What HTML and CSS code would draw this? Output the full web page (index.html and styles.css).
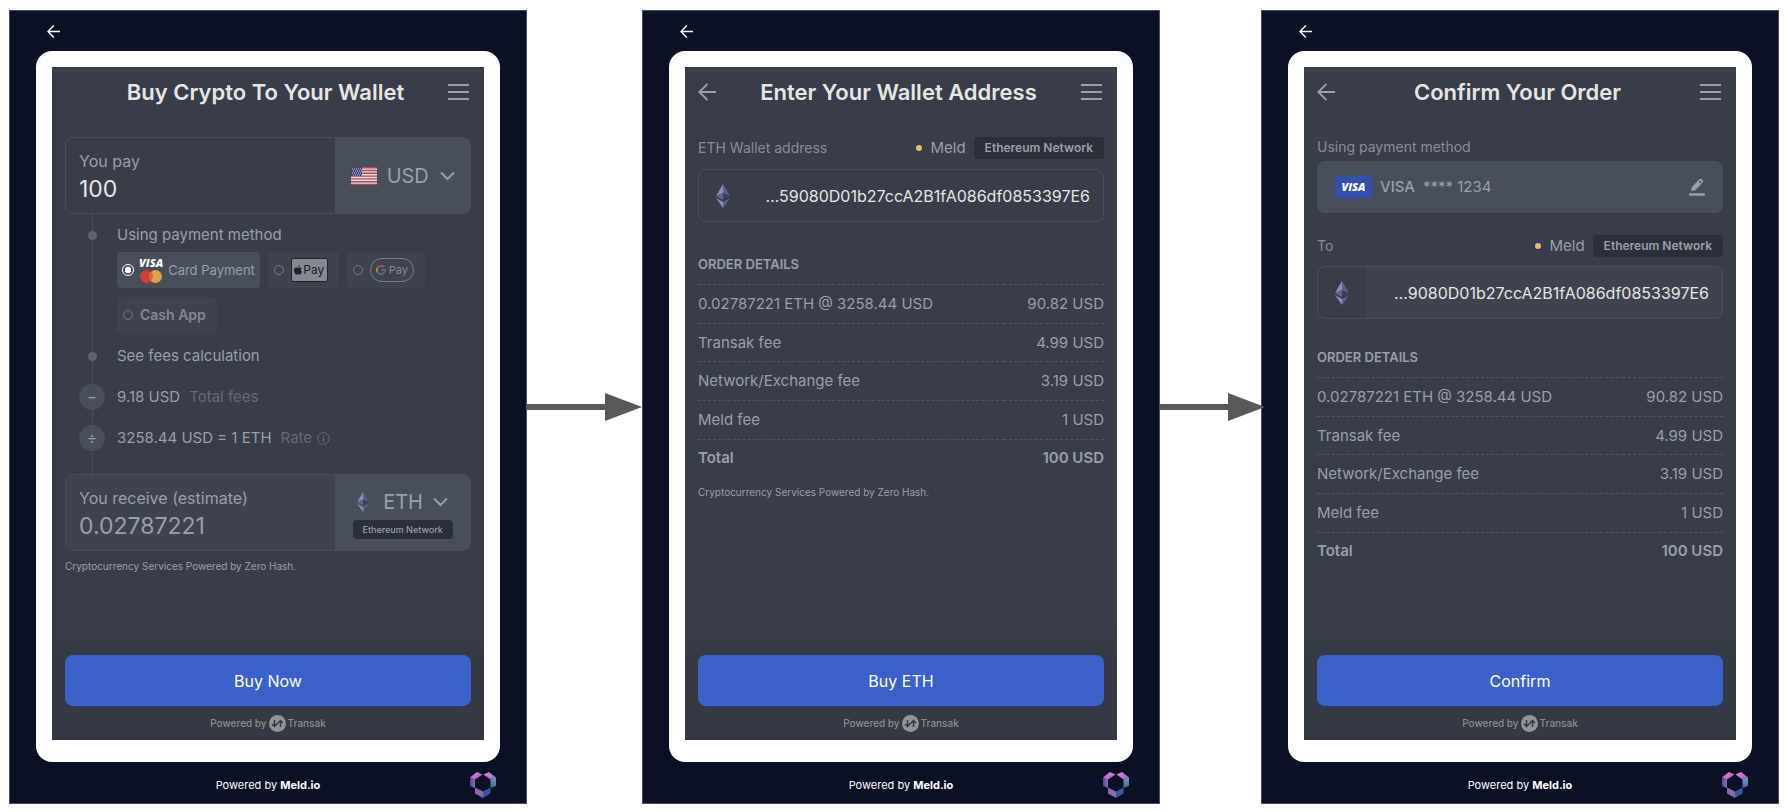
FILE: index.html
```html
<!DOCTYPE html>
<html lang="en">
<head>
    <meta charset="UTF-8">
    <meta name="viewport" content="width=device-width, initial-scale=1.0">
    <title>Meld Crypto Checkout Flow</title>
    <link rel="stylesheet" href="styles.css">
</head>
<body>
    <!-- Shared icons -->
    <svg class="sprite" aria-hidden="true">
        <linearGradient id="pink" x1="0" y1="0" x2="1" y2="1"><stop offset="0" stop-color="#ea86d4"/><stop offset="1" stop-color="#9c62c0"/></linearGradient>
        <linearGradient id="violet" x1="0" y1="0" x2="1" y2="0"><stop offset="0" stop-color="#52469a"/><stop offset="1" stop-color="#8a6fb8"/></linearGradient>
        <linearGradient id="teal" x1="0" y1="0" x2="0" y2="1"><stop offset="0" stop-color="#6f9fbc"/><stop offset="1" stop-color="#4064a8"/></linearGradient>
        <symbol id="i-back" viewBox="0 0 18 18"><path d="M18 9H1.500M9.500 .8L1.300 9L9.500 17.200" fill="none" stroke="currentColor" stroke-width="1.900"/></symbol>
        <symbol id="i-menu" viewBox="0 0 21 16"><path d="M0 1h21M0 8h21M0 15h21" stroke="currentColor" stroke-width="2"/></symbol>
        <symbol id="i-chevron" viewBox="0 0 15 10"><path d="M1 1.500L7.500 8L14 1.500" fill="none" stroke="currentColor" stroke-width="2"/></symbol>
        <symbol id="i-eth" viewBox="0 0 14 24">
            <path d="M7 0L0 12l7-3z" fill="#8c8fae"/><path d="M7 0l7 12-7-3z" fill="#5e6189"/>
            <path d="M7 9l-7 3 7 4z" fill="#62668f"/><path d="M7 9l7 3-7 4z" fill="#3b3e66"/>
            <path d="M0 14l7 10v-6z" fill="#8c8fae"/><path d="M14 14L7 24v-6z" fill="#5e6189"/>
        </symbol>
        <symbol id="i-transak" viewBox="0 0 17 17"><circle cx="8.500" cy="8.500" r="8.500" fill="#929496"/><path d="M5.500 5v6M3 9l2.500 2.500L8 9M5.500 11.500L11.500 5.500M9 8l2.500-2.500L14 8M11.500 6v6" fill="none" stroke="#343943" stroke-width="1.500"/></symbol>
        <symbol id="i-meld" viewBox="0 0 26 26">
            <path d="M0 5.500L7 0l5.500 2.500L5 7.500z" fill="url(#pink)"/>
            <path d="M0 5.500l5 2V16l-5-2z" fill="url(#violet)"/>
            <path d="M13.500 2.500L19 0l7 5.500-5.500 2z" fill="url(#pink)"/>
            <path d="M26 5.500l-5.500 2V16l5.500-2z" fill="url(#teal)"/>
            <path d="M5 15.500l8 4V26l-8-4.500z" fill="#8e68a8"/>
            <path d="M20.500 15.500l-7.500 4V26l7.500-4.500z" fill="#3c559c"/>
        </symbol>
    </svg>

    <main class="flow">
        <!-- Step 1: amount -->
        <section class="panel">
            <div class="panel-top">
                <button class="icon-btn exit" aria-label="Exit"><svg width="13" height="13"><use href="#i-back"/></svg></button>
            </div>
            <div class="card">
                <div class="screen">
                    <header class="screen-header">
                        <span class="header-side"></span>
                        <h1>Buy Crypto To Your Wallet</h1>
                        <button class="icon-btn" aria-label="Menu"><svg width="21" height="16"><use href="#i-menu"/></svg></button>
                    </header>

                    <form class="content">
                        <div class="amount-box">
                            <div class="amount">
                                <label for="pay">You pay</label>
                                <input id="pay" type="text" value="100">
                            </div>
                            <div class="currency">
                                <div class="currency-row">
                                    <svg width="26" height="18" viewBox="0 0 26 18">
                                        <path fill="#e2dcdc" d="M0 0h26v18H0z"/>
                                        <path d="M0 .7h26M0 3.500h26M0 6.300h26M0 9.100h26M0 11.900h26M0 14.700h26M0 17.500h26" stroke="#b04c52" stroke-width="1.400"/>
                                        <path fill="#41437a" d="M0 0h11v9H0z"/>
                                        <path d="M1 2h10M2 4h9M1 6h10M2 8h9" stroke="#c9c9d8" stroke-dasharray="1 1"/>
                                    </svg>
                                    <select aria-label="Pay currency"><option>USD</option></select>
                                    <svg width="15" height="10"><use href="#i-chevron"/></svg>
                                </div>
                            </div>
                        </div>

                        <div class="timeline">
                            <div class="step"><span class="marker"><i class="dot"></i></span><span id="method">Using payment method</span></div>
                            <div class="methods" role="radiogroup" aria-labelledby="method">
                                <label class="chip active">
                                    <input type="radio" name="method" checked>
                                    <span class="card-logos">
                                        <span class="visa">VISA</span>
                                        <svg width="22" height="13" viewBox="0 0 22 13"><circle cx="6.500" cy="6.500" r="6.500" fill="#cc4138"/><circle cx="15.500" cy="6.500" r="6.500" fill="#e2a14c"/><path d="M11 1.800a6.500 6.500 0 0 1 0 9.400a6.500 6.500 0 0 1 0-9.400z" fill="#d9673c"/></svg>
                                    </span>
                                    Card Payment
                                </label>
                                <label class="chip">
                                    <input type="radio" name="method">
                                    <span class="apple-pay">
                                        <svg width="8" height="10" viewBox="0 0 8 10"><path d="M5.700 0C5.700 1.200 4.900 2.100 3.900 2.100C3.800 1 4.700.1 5.700 0zM7.600 3.400C6.400 4.200 6.600 6 8 6.600C7.500 8.200 6.700 9.600 5.800 9.600C5.100 9.600 4.900 9.200 4.200 9.200C3.500 9.200 3.200 9.600 2.600 9.600C1.600 9.600 0 7.300 0 5.300C0 3.400 1.200 2.500 2.400 2.500C3.200 2.500 3.700 3 4.200 3C4.700 3 5.300 2.400 6.200 2.500C6.800 2.500 7.300 2.900 7.600 3.400z" fill="#1c2027"/></svg>Pay
                                    </span>
                                </label>
                                <label class="chip">
                                    <input type="radio" name="method">
                                    <span class="google-pay">
                                        <svg width="10" height="10" viewBox="0 0 10 10" fill="none" stroke-width="1.800"><path d="M8.100 2.200A4.100 4.100 0 0 0 1.500 2.900" stroke="#a8544f"/><path d="M1.500 2.900a4.100 4.100 0 0 0 0 4.200" stroke="#a8904a"/><path d="M1.500 7.100a4.100 4.100 0 0 0 6 1.100" stroke="#4c7d5d"/><path d="M7.500 8.200A4.100 4.100 0 0 0 9.100 5H5.200" stroke="#4b69a4"/></svg>
                                        Pay
                                    </span>
                                </label>
                                <label class="chip cash"><input type="radio" name="method"> Cash App</label>
                            </div>
                            <div class="step fees"><span class="marker"><i class="dot"></i></span>See fees calculation</div>
                            <div class="step"><span class="marker sign">−</span>9.18 USD <span class="muted">Total fees</span></div>
                            <div class="step">
                                <span class="marker sign">÷</span>3258.44 USD = 1 ETH
                                <span class="muted">Rate
                                    <svg width="13" height="13" viewBox="0 0 13 13" fill="none" stroke="currentColor"><circle cx="6.500" cy="6.500" r="5.800"/><path d="M6.500 5.500v4.500M6.500 3v1.400"/></svg>
                                </span>
                            </div>
                        </div>

                        <div class="amount-box receive">
                            <div class="amount">
                                <label for="receive">You receive (estimate)</label>
                                <input id="receive" type="text" value="0.02787221" readonly>
                            </div>
                            <div class="currency">
                                <div class="currency-row">
                                    <svg class="eth-small" width="12" height="20"><use href="#i-eth"/></svg>
                                    <select aria-label="Receive currency"><option>ETH</option></select>
                                    <svg width="15" height="10"><use href="#i-chevron"/></svg>
                                </div>
                                <span class="badge small">Ethereum Network</span>
                            </div>
                        </div>
                        <p class="disclaimer">Cryptocurrency Services Powered by Zero Hash.</p>
                    </form>

                    <footer class="screen-footer">
                        <button class="primary">Buy Now</button>
                        <p class="transak">Powered by <svg width="17" height="17"><use href="#i-transak"/></svg> Transak</p>
                    </footer>
                </div>
            </div>
            <div class="panel-bottom">
                <span></span>
                <p>Powered by <b>Meld.io</b></p>
                <svg width="26" height="26"><use href="#i-meld"/></svg>
            </div>
        </section>

        <div class="arrow">
            <span class="arrow-line"></span>
            <svg width="37" height="28" viewBox="0 0 37 28"><path d="M0 0l37 14L0 28z" fill="#595959"/></svg>
        </div>

        <!-- Step 2: wallet address -->
        <section class="panel">
            <div class="panel-top">
                <button class="icon-btn exit" aria-label="Exit"><svg width="13" height="13"><use href="#i-back"/></svg></button>
            </div>
            <div class="card">
                <div class="screen">
                    <header class="screen-header">
                        <button class="icon-btn header-side" aria-label="Back"><svg width="18" height="18"><use href="#i-back"/></svg></button>
                        <h1>Enter Your Wallet Address</h1>
                        <button class="icon-btn" aria-label="Menu"><svg width="21" height="16"><use href="#i-menu"/></svg></button>
                    </header>

                    <form class="content">
                        <div class="field-head">
                            <label for="wallet">ETH Wallet address</label>
                            <span class="network"><i class="status"></i>Meld <span class="badge">Ethereum Network</span></span>
                        </div>
                        <div class="address">
                            <span class="address-icon"><svg width="14" height="24"><use href="#i-eth"/></svg></span>
                            <input id="wallet" type="text" value="…59080D01b27ccA2B1fA086df0853397E6">
                        </div>

                        <h2>ORDER DETAILS</h2>
                        <table class="details">
                            <tr><td>0.02787221 ETH @ 3258.44 USD</td><td>90.82 USD</td></tr>
                            <tr><td>Transak fee</td><td>4.99 USD</td></tr>
                            <tr><td>Network/Exchange fee</td><td>3.19 USD</td></tr>
                            <tr><td>Meld fee</td><td>1 USD</td></tr>
                            <tr class="total"><td>Total</td><td>100 USD</td></tr>
                        </table>
                        <p class="disclaimer">Cryptocurrency Services Powered by Zero Hash.</p>
                    </form>

                    <footer class="screen-footer">
                        <button class="primary">Buy ETH</button>
                        <p class="transak">Powered by <svg width="17" height="17"><use href="#i-transak"/></svg> Transak</p>
                    </footer>
                </div>
            </div>
            <div class="panel-bottom">
                <span></span>
                <p>Powered by <b>Meld.io</b></p>
                <svg width="26" height="26"><use href="#i-meld"/></svg>
            </div>
        </section>

        <div class="arrow over">
            <span class="arrow-line"></span>
            <svg width="37" height="28" viewBox="0 0 37 28"><path d="M0 0l37 14L0 28z" fill="#595959"/></svg>
        </div>

        <!-- Step 3: confirmation -->
        <section class="panel">
            <div class="panel-top">
                <button class="icon-btn exit" aria-label="Exit"><svg width="13" height="13"><use href="#i-back"/></svg></button>
            </div>
            <div class="card">
                <div class="screen">
                    <header class="screen-header">
                        <button class="icon-btn header-side" aria-label="Back"><svg width="18" height="18"><use href="#i-back"/></svg></button>
                        <h1>Confirm Your Order</h1>
                        <button class="icon-btn" aria-label="Menu"><svg width="21" height="16"><use href="#i-menu"/></svg></button>
                    </header>

                    <form class="content confirm">
                        <p class="caption">Using payment method</p>
                        <div class="saved-card">
                            <span class="visa-badge">VISA</span>
                            <b>VISA</b>
                            <span>**** 1234</span>
                            <button type="button" class="icon-btn edit" aria-label="Edit payment method">
                                <svg width="16" height="18" viewBox="0 0 16 18"><path d="M1 16.500h14" stroke="currentColor" stroke-width="2.400" stroke-linecap="round"/><path fill="currentColor" fill-rule="evenodd" d="M2 13L2.600 9.600L10 1.500Q11.500 0 13 1.200L13.600 1.800Q15 3.200 13.600 4.600L6 12.400zM11 2.600L10 3.700L11.700 5.300L12.700 4.200z"/></svg>
                            </button>
                        </div>
                        <div class="field-head">
                            <label for="to">To</label>
                            <span class="network"><i class="status"></i>Meld <span class="badge">Ethereum Network</span></span>
                        </div>
                        <div class="address locked">
                            <span class="address-icon"><svg width="14" height="24"><use href="#i-eth"/></svg></span>
                            <input id="to" type="text" value="…9080D01b27ccA2B1fA086df0853397E6" readonly>
                        </div>

                        <h2>ORDER DETAILS</h2>
                        <table class="details">
                            <tr><td>0.02787221 ETH @ 3258.44 USD</td><td>90.82 USD</td></tr>
                            <tr><td>Transak fee</td><td>4.99 USD</td></tr>
                            <tr><td>Network/Exchange fee</td><td>3.19 USD</td></tr>
                            <tr><td>Meld fee</td><td>1 USD</td></tr>
                            <tr class="total"><td>Total</td><td>100 USD</td></tr>
                        </table>
                    </form>

                    <footer class="screen-footer">
                        <button class="primary">Confirm</button>
                        <p class="transak">Powered by <svg width="17" height="17"><use href="#i-transak"/></svg> Transak</p>
                    </footer>
                </div>
            </div>
            <div class="panel-bottom">
                <span></span>
                <p>Powered by <b>Meld.io</b></p>
                <svg width="26" height="26"><use href="#i-meld"/></svg>
            </div>
        </section>
    </main>
</body>
</html>
```
FILE: styles.css
```css
:root {
    --navy: #0b1025;
    --screen: #383d49;
    --raised: #494e5b;
    --line: #494e5b;
    --badge: #2a2f39;
    --text: #9a9fac;
    --muted: #666b78;
    --bright: #e6e6e4;
    --primary: #3963cb;
}

* {
    box-sizing: border-box;
    margin: 0;
    padding: 0;
}

body {
    background: #fff;
    color: var(--text);
    font-family: Inter, "Open Sans", sans-serif;
    font-size: 15px;
    line-height: 20px;
}

button, input, select {
    font: inherit;
    color: inherit;
    background: none;
    border: none;
    outline: none;
}

svg {
    display: block;
    flex: none;
}

.sprite {
    position: absolute;
    width: 0;
    height: 0;
}

.flow {
    display: grid;
    grid-template-columns: 518fr 115fr 518fr 101fr 518fr;
    min-height: 100vh;
    padding: 10px 9px 8px;
}

/* Outer panel */
.panel {
    display: flex;
    flex-direction: column;
    min-width: 0;
    padding: 0 26px;
    background: var(--navy);
    border: 1px solid #4b5063;
}

.panel-top {
    display: flex;
    align-items: center;
    height: 40px;
    padding-left: 11px;
}

.icon-btn {
    display: flex;
    cursor: pointer;
}

.exit {
    color: #fff;
}

.card {
    display: flex;
    flex: 1;
    padding: 16px 16px 22px;
    background: #fff;
    border-radius: 16px;
}

.panel-bottom {
    display: grid;
    grid-template-columns: 26px 1fr 26px;
    align-items: center;
    height: 41px;
    padding: 4px 4px 0;
    color: #fff;
    font-size: 11px;
    text-align: center;
}

/* Widget screen */
.screen {
    display: flex;
    flex: 1;
    flex-direction: column;
    min-width: 0;
    background: var(--screen);
}

.screen-header {
    display: flex;
    align-items: center;
    justify-content: space-between;
    height: 50px;
    padding: 0 15px 0 13px;
}

.header-side {
    width: 18px;
}

h1 {
    color: var(--bright);
    font-size: 22px;
    font-weight: 600;
    line-height: 28px;
}

.content {
    flex: 1;
    padding: 20px 13px 0;
}

/* Amount boxes */
.amount-box {
    display: grid;
    grid-template-columns: 2fr 1fr;
    height: 77px;
    border: 1px solid var(--line);
    border-radius: 8px;
    overflow: hidden;
}

.amount {
    display: flex;
    flex-direction: column;
    justify-content: center;
    min-width: 0;
    padding: 6px 13px 0;
}

.amount label {
    font-size: 16px;
}

.amount input {
    width: 100%;
    height: 36px;
    color: var(--bright);
    font-size: 23px;
}

.receive .amount {
    background: #3e434f;
}

.receive .amount input {
    color: var(--text);
}

.currency {
    display: flex;
    flex-direction: column;
    align-items: center;
    justify-content: center;
    gap: 6px;
    background: var(--raised);
}

.receive .currency {
    padding-top: 4px;
}

.currency-row {
    display: flex;
    align-items: center;
    gap: 10px;
}

.currency select {
    appearance: none;
    font-size: 20px;
    line-height: 24px;
}

.eth-small {
    margin-right: 4px;
}

.badge {
    display: flex;
    align-items: center;
    height: 22px;
    padding: 0 11px;
    background: var(--badge);
    border-radius: 4px;
    font-size: 12px;
    font-weight: 600;
}

.badge.small {
    height: 19px;
    padding: 0 10px;
    font-size: 9px;
    font-weight: 500;
}

/* Steps between the two amounts */
.timeline {
    margin-left: 27px;
    padding: 11px 0 26px;
    border-left: 1px solid var(--line);
}

.step {
    display: flex;
    align-items: center;
    gap: 12px;
    height: 20px;
    margin-left: -14px;
    font-size: 15px;
}

.step + .step {
    margin-top: 21px;
}

.step.fees {
    margin-top: 13px;
}

.marker {
    display: flex;
    align-items: center;
    justify-content: center;
    width: 26px;
    height: 26px;
}

.dot {
    width: 9px;
    height: 9px;
    background: #5c646c;
    border-radius: 50%;
}

.sign {
    background: var(--raised);
    border-radius: 50%;
}

.muted {
    display: flex;
    align-items: center;
    gap: 5px;
    color: var(--muted);
}

.step .muted {
    margin-left: -3px;
}

.methods {
    display: flex;
    flex-wrap: wrap;
    gap: 9px 8px;
    margin: 7px 0 0 24px;
}

.chip {
    display: flex;
    align-items: center;
    gap: 7px;
    height: 36px;
    padding: 0 11px 0 6px;
    background: #3e434f;
    border-radius: 4px;
    font-size: 13px;
}

.chip.active {
    gap: 5px;
    padding: 0 5px;
    background: var(--raised);
}

.chip input {
    appearance: none;
    flex: none;
    width: 10px;
    height: 10px;
    border: 1px solid #777b83;
    border-radius: 50%;
}

.chip input:checked {
    width: 12px;
    height: 12px;
    border-color: #fff;
    background: radial-gradient(#fff 45%, transparent 50%);
}

.chip.cash {
    color: #85888f;
    font-size: 14px;
    font-weight: 600;
}

.card-logos {
    display: flex;
    flex-direction: column;
    align-items: center;
    gap: 3px;
}

.visa {
    color: #fff;
    font: italic 800 11px/9px "Open Sans", sans-serif;
}

.apple-pay,
.google-pay {
    display: flex;
    align-items: center;
    justify-content: center;
    height: 24px;
    font-size: 12px;
    line-height: 16px;
}

.apple-pay {
    gap: 1px;
    width: 37px;
    background: #858994;
    border: 1px solid #20242b;
    border-radius: 2px;
    color: #1c2027;
}

.google-pay {
    gap: 3px;
    width: 44px;
    border: 1px solid #7c7f87;
    border-radius: 12px;
    color: #858991;
    font-size: 11px;
}

.disclaimer {
    margin-top: 5px;
    font-size: 10px;
}

/* Wallet address */
.field-head {
    display: flex;
    align-items: center;
    justify-content: space-between;
    height: 22px;
}

.field-head label,
.caption {
    color: #888d9a;
    font-size: 14px;
}

.network {
    display: flex;
    align-items: center;
    gap: 8px;
    font-size: 15px;
}

.status {
    width: 6px;
    height: 6px;
    background: #e8bd68;
    border-radius: 50%;
}

.address {
    display: flex;
    height: 53px;
    margin-top: 10px;
    border: 1px solid var(--line);
    border-radius: 8px;
    overflow: hidden;
}

.address-icon {
    display: flex;
    align-items: center;
    justify-content: center;
    width: 48px;
}

.address input {
    flex: 1;
    min-width: 0;
    padding-right: 13px;
    color: var(--bright);
    font-size: 16px;
    text-align: right;
}

.address.locked input {
    background: #3e434f;
}

.confirm .caption {
    margin-bottom: 4px;
}

.confirm .address {
    margin-top: 9px;
}

.saved-card {
    display: flex;
    align-items: center;
    gap: 8px;
    height: 52px;
    margin-bottom: 22px;
    padding: 0 18px;
    background: var(--raised);
    border-radius: 8px;
    font-size: 15px;
}

.saved-card b {
    font-weight: 500;
}

.visa-badge {
    display: flex;
    align-items: center;
    justify-content: center;
    width: 37px;
    height: 22px;
    background: #334eac;
    border-radius: 2px;
    color: #fff;
    font: italic 800 11px/14px "Open Sans", sans-serif;
}

.edit {
    margin-left: auto;
}

/* Order details */
h2 {
    margin: 32px 0 10px;
    font-size: 13px;
    font-weight: 600;
    line-height: 20px;
}

.confirm h2 {
    margin-top: 28px;
}

.details {
    width: 100%;
    height: 193px;
    border-collapse: collapse;
}

.details td {
    border-top: 1px dashed #505562;
}

.details td:last-child {
    text-align: right;
}

.total {
    font-weight: 600;
}

/* Action area */
.screen-footer {
    padding: 30px 13px 0;
    background: linear-gradient(var(--screen), #343944 30px);
}

.primary {
    width: 100%;
    height: 51px;
    background: var(--primary);
    border-radius: 8px;
    color: #fff;
    font-size: 16px;
    cursor: pointer;
}

.transak {
    display: flex;
    align-items: center;
    justify-content: center;
    gap: 2px;
    height: 34px;
    color: #8b8d90;
    font-size: 10px;
    font-weight: 500;
}

/* Connectors */
.arrow {
    display: flex;
    align-items: center;
    z-index: 1;
}

.arrow-line {
    flex: 1;
    height: 6px;
    background: #595959;
}

.arrow.over {
    margin-right: -4px;
}
```
